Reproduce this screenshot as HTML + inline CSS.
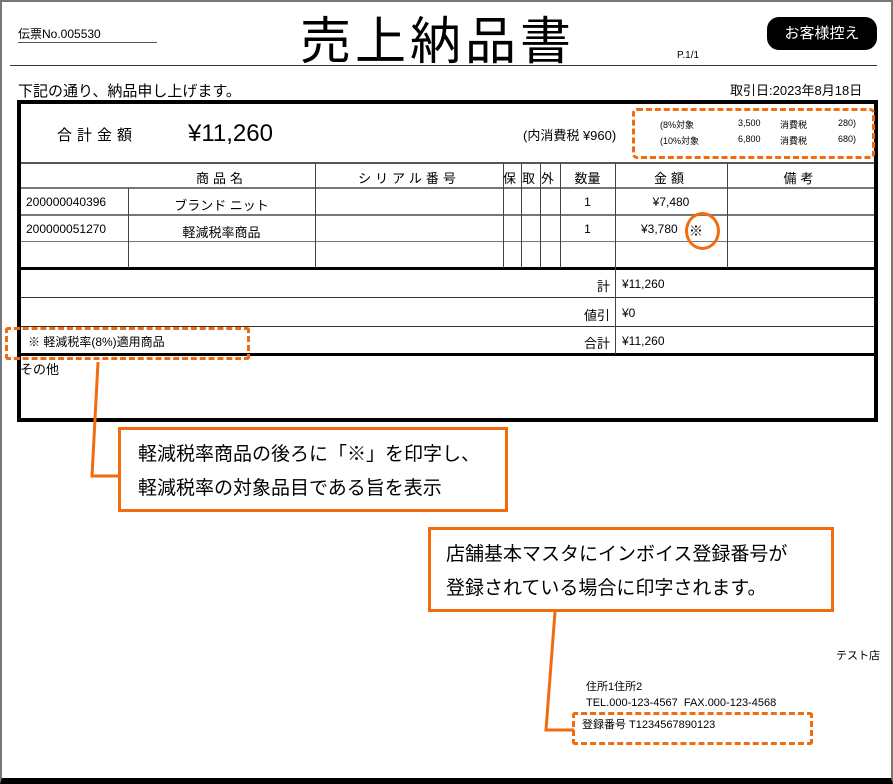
<!DOCTYPE html>
<html><head><meta charset="utf-8"><style>
*{margin:0;padding:0;box-sizing:border-box}
body{width:893px;height:784px;background:#fff;position:relative;overflow:hidden;font-family:"Liberation Sans","Noto Sans CJK JP",sans-serif;color:#000}
.a{position:absolute;white-space:nowrap}
.f{font-size:13px}
.h{position:absolute;background:#555;height:2px}
.v{position:absolute;background:#444;width:1px}
</style></head><body>
<div class="a" style="left:0;top:0;width:893px;height:784px;border:2px solid #777;border-bottom:6px solid #000"></div>
<div class="a f" style="left:18px;top:25px;font-size:12px">伝票No.005530</div>
<div class="a" style="left:18px;top:42px;width:139px;height:1px;background:#555"></div>
<div class="a" style="left:300px;top:0px;font-size:51px;letter-spacing:4px">売上納品書</div>
<div class="a" style="left:767px;top:17px;width:110px;height:33px;background:#000;border-radius:12px;color:#fff;font-size:15px;line-height:33px;text-align:center">お客様控え</div>
<div class="a" style="left:677px;top:50px;font-size:10px">P.1/1</div>
<div class="a" style="left:10px;top:65px;width:867px;height:1px;background:#333"></div>
<div class="a" style="left:18px;top:80px;font-size:15px">下記の通り、納品申し上げます。</div>
<div class="a" style="left:730px;top:80px;font-size:13px">取引日:2023年8月18日</div>
<div class="a" style="left:17px;top:100px;width:861px;height:322px;border:4px solid #000"></div>
<div class="a" style="left:57px;top:124px;font-size:15px;letter-spacing:5px">合計金額</div>
<div class="a" style="left:188px;top:120px;font-size:24px">¥11,260</div>
<div class="a" style="left:523px;top:125px;font-size:13px">(内消費税 ¥960)</div>
<div class="a" style="left:660px;top:118px;font-size:9px">(8%対象</div>
<div class="a" style="left:738px;top:118px;font-size:9px">3,500</div>
<div class="a" style="left:780px;top:118px;font-size:9px">消費税</div>
<div class="a" style="left:838px;top:118px;font-size:9px">280)</div>
<div class="a" style="left:660px;top:134px;font-size:9px">(10%対象</div>
<div class="a" style="left:738px;top:134px;font-size:9px">6,800</div>
<div class="a" style="left:780px;top:134px;font-size:9px">消費税</div>
<div class="a" style="left:838px;top:134px;font-size:9px">680)</div>
<div class="a" style="left:632px;top:108px;width:243px;height:51px;border:3px dashed #f26b0f;border-radius:5px"></div>
<div class="h" style="left:21px;top:162px;width:853px"></div>
<div class="h" style="left:21px;top:187px;width:853px;height:2px;background:#777"></div>
<div class="h" style="left:21px;top:214px;width:853px;background:#777"></div>
<div class="h" style="left:21px;top:241px;width:853px;background:#777;height:1px"></div>
<div class="h" style="left:21px;top:267px;width:853px;height:3px;background:#000"></div>
<div class="h" style="left:21px;top:297px;width:853px;height:1px;background:#333"></div>
<div class="h" style="left:21px;top:326px;width:853px;height:1px;background:#333"></div>
<div class="h" style="left:21px;top:353px;width:853px;height:3px;background:#000"></div>
<div class="v" style="left:128px;top:188px;height:80px"></div>
<div class="v" style="left:315px;top:163px;height:105px"></div>
<div class="v" style="left:503px;top:163px;height:105px"></div>
<div class="v" style="left:521px;top:163px;height:105px"></div>
<div class="v" style="left:540px;top:163px;height:105px"></div>
<div class="v" style="left:560px;top:163px;height:105px"></div>
<div class="v" style="left:615px;top:163px;height:191px"></div>
<div class="v" style="left:727px;top:163px;height:105px"></div>
<div class="a f" style="left:128px;width:187px;top:168px;text-align:center;letter-spacing:4px">商品名</div>
<div class="a f" style="left:315px;width:188px;top:168px;text-align:center;letter-spacing:4px">シリアル番号</div>
<div class="a f" style="left:503px;top:168px">保</div>
<div class="a f" style="left:522px;top:168px">取</div>
<div class="a f" style="left:541px;top:168px">外</div>
<div class="a f" style="left:560px;width:55px;top:168px;text-align:center">数量</div>
<div class="a f" style="left:615px;width:112px;top:168px;text-align:center;letter-spacing:4px">金額</div>
<div class="a f" style="left:727px;width:147px;top:168px;text-align:center;letter-spacing:4px">備考</div>
<div class="a f" style="left:26px;top:195px;font-size:12px">200000040396</div>
<div class="a f" style="left:128px;width:187px;top:195px;text-align:center">ブランド ニット</div>
<div class="a f" style="left:560px;width:55px;top:195px;text-align:center;font-size:12px">1</div>
<div class="a f" style="left:615px;width:112px;top:195px;text-align:center;font-size:12px">¥7,480</div>
<div class="a f" style="left:26px;top:222px;font-size:12px">200000051270</div>
<div class="a f" style="left:128px;width:187px;top:222px;text-align:center">軽減税率商品</div>
<div class="a f" style="left:560px;width:55px;top:222px;text-align:center;font-size:12px">1</div>
<div class="a f" style="left:641px;top:222px;font-size:12px">¥3,780</div>
<div class="a f" style="left:689px;top:221px;font-size:14px">※</div>
<div class="a" style="left:685px;top:212px;width:35px;height:38px;border:3px solid #f26b0f;border-radius:50%"></div>
<div class="a f" style="left:597px;top:276px">計</div>
<div class="a f" style="left:622px;top:277px;font-size:12px">¥11,260</div>
<div class="a f" style="left:584px;top:305px">値引</div>
<div class="a f" style="left:622px;top:306px;font-size:12px">¥0</div>
<div class="a f" style="left:584px;top:333px">合計</div>
<div class="a f" style="left:622px;top:334px;font-size:12px">¥11,260</div>
<div class="a f" style="left:28px;top:333px;font-size:12px">※ 軽減税率(8%)適用商品</div>
<div class="a" style="left:5px;top:327px;width:245px;height:33px;border:3px dashed #f26b0f;border-radius:3px"></div>
<div class="a f" style="left:20px;top:359px">その他</div>
<svg class="a" style="left:0;top:0" width="893" height="784"><polyline points="98,362 92,476 120,476" fill="none" stroke="#f26b0f" stroke-width="3"/><polyline points="555,612 546,730 574,730" fill="none" stroke="#f26b0f" stroke-width="3"/></svg>
<div class="a" style="left:118px;top:427px;width:390px;height:85px;border:3px solid #f26b0f;background:#fff;padding:8px 0 0 17px;font-size:19px;line-height:34px">軽減税率商品の後ろに「※」を印字し、<br>軽減税率の対象品目である旨を表示</div>
<div class="a" style="left:428px;top:527px;width:406px;height:85px;border:3px solid #f26b0f;background:#fff;padding:8px 0 0 15px;font-size:19px;line-height:34px">店舗基本マスタにインボイス登録番号が<br>登録されている場合に印字されます。</div>
<div class="a" style="left:836px;top:647px;font-size:11px">テスト店</div>
<div class="a" style="left:586px;top:678px;font-size:11px">住所1住所2</div>
<div class="a" style="left:586px;top:697px;font-size:11px">TEL.000-123-4567&nbsp; FAX.000-123-4568</div>
<div class="a" style="left:582px;top:716px;font-size:11px">登録番号 T1234567890123</div>
<div class="a" style="left:572px;top:712px;width:241px;height:33px;border:3px dashed #f26b0f;border-radius:3px"></div>
</body></html>
